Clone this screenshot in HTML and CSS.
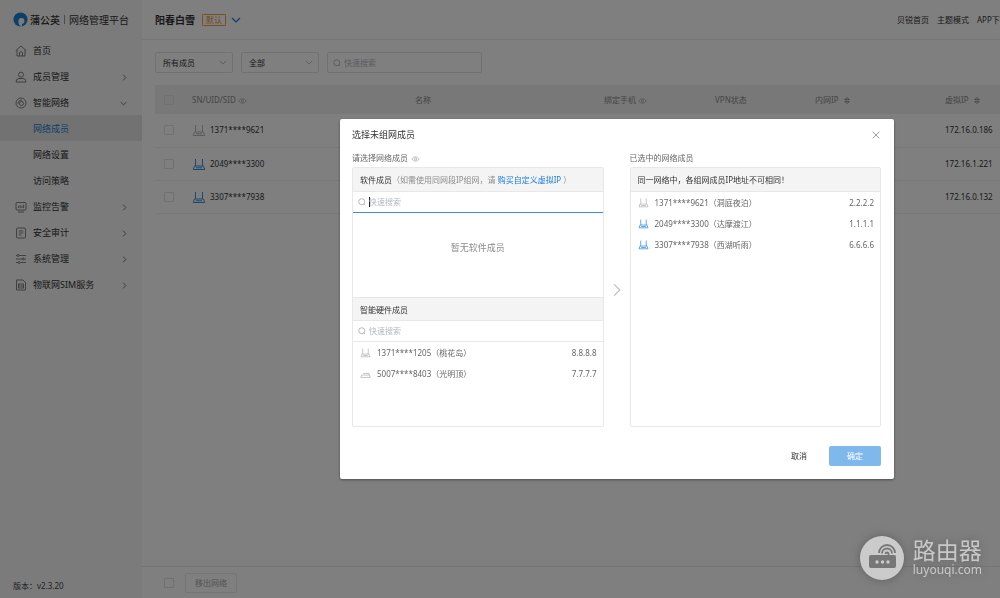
FILE: index.html
```html
<!DOCTYPE html>
<html lang="zh-CN">
<head>
<meta charset="utf-8">
<title>蒲公英网络管理平台</title>
<link rel="stylesheet" href="styles.css">
</head>
<body>
<svg class="defs" aria-hidden="true">
  <symbol id="right" viewBox="0 0 6 10"><path d="M1 1l4 4-4 4"/></symbol>
  <symbol id="down" viewBox="0 0 10 6"><path d="M1 1l4 4 4-4"/></symbol>
  <symbol id="search" viewBox="0 0 10 10"><circle cx="4.7" cy="4.7" r="3.8"/><path d="M7.400 7.400L8.800 8.800"/></symbol>
  <symbol id="eye" viewBox="0 0 12 8"><path d="M1 4q5-6 10 0q-5 6-10 0z"/><circle cx="6" cy="4" r="1.5"/></symbol>
  <symbol id="sort" viewBox="0 0 8 10"><path d="M1.5 4L4 1.5 6.500 4zM1.500 6L4 8.500 6.500 6z"/></symbol>
  <symbol id="router" viewBox="0 0 14 14"><path d="M3.500 2v7M10.500 2v7"/><path class="body" d="M2.500 9h9l1.200 3.500H1.300z"/><path class="thin" d="M4 10.800h6"/></symbol>
  <symbol id="box" viewBox="0 0 14 14"><path class="body" d="M2 9h10l1 3H1z"/><path d="M4 7h7.500v2"/></symbol>
</svg>

<div class="app">
  <aside class="sidebar">
    <div class="brand">
      <svg class="logo" viewBox="0 0 16 16"><circle cx="8" cy="8" r="7.500" fill="#1a7fd0"/><circle cx="9" cy="9.500" r="3.200" fill="#f7f7f7"/><path d="M5.800 10q0 4 3.200 6l1-4z" fill="#f7f7f7"/></svg>
      <strong>蒲公英</strong><span class="bar"></span><span>网络管理平台</span>
    </div>
    <nav class="menu">
      <a href="#"><svg class="ico" viewBox="0 0 12 12"><path d="M.8 5.500L6 1l5.200 4.500M2 5v6h8V5M4.500 11V7.500q1.500-2 3 0V11"/></svg><span>首页</span></a>
      <a href="#"><svg class="ico" viewBox="0 0 12 12"><circle cx="6" cy="3.700" r="2.500"/><path d="M1 11q0-3.500 3-3.500h4q3 0 3 3.500z"/></svg><span>成员管理</span><svg class="arrow"><use href="#right"/></svg></a>
      <a href="#"><svg class="ico" viewBox="0 0 12 12"><circle cx="6" cy="6" r="5"/><circle cx="6.500" cy="6.500" r="2"/><path d="M3 7q0-4 4-3.800"/></svg><span>智能网络</span><svg class="arrow down"><use href="#down"/></svg></a>
      <a href="#" class="sub active" aria-current="page">网络成员</a>
      <a href="#" class="sub">网络设置</a>
      <a href="#" class="sub">访问策略</a>
      <a href="#"><svg class="ico" viewBox="0 0 12 12"><rect x="1" y="1.500" width="10" height="7.500" rx="1"/><path d="M3 11h6M3.500 7V5M5.200 7V4M6.900 7V5M8.600 7V3.500"/></svg><span>监控告警</span><svg class="arrow"><use href="#right"/></svg></a>
      <a href="#"><svg class="ico" viewBox="0 0 12 12"><rect x="1.500" y="1" width="9" height="10" rx="1"/><path d="M3.800 4h4.500M3.800 6h4.500M3.800 8h2.500"/></svg><span>安全审计</span><svg class="arrow"><use href="#right"/></svg></a>
      <a href="#"><svg class="ico" viewBox="0 0 12 12"><path d="M1 2.500h1M4 2.500h7M1 6h6M9.500 6H11M1 9.500h2M5.500 9.500H11"/><circle cx="3" cy="2.500" r="1"/><circle cx="8.200" cy="6" r="1"/><circle cx="4.200" cy="9.500" r="1"/></svg><span>系统管理</span><svg class="arrow"><use href="#right"/></svg></a>
      <a href="#"><svg class="ico" viewBox="0 0 12 12"><path d="M1.500 1H8l2.500 2.500V11h-9z"/><rect x="3.500" y="5" width="5" height="4"/><path d="M3.500 7h5"/></svg><span>物联网SIM服务</span><svg class="arrow"><use href="#right"/></svg></a>
    </nav>
    <div class="version">版本：v2.3.20</div>
  </aside>

  <main class="main">
    <header class="topbar">
      <h1>阳春白雪</h1><span class="tag">默认</span><svg class="switch"><use href="#down"/></svg>
      <nav class="links"><a href="#">贝锐首页</a><a href="#">主题模式</a><a href="#">APP下载</a></nav>
    </header>
    <section class="content">
      <div class="filters">
        <label class="pick"><select aria-label="成员类型"><option>所有成员</option></select><svg><use href="#down"/></svg></label>
        <label class="pick"><select aria-label="状态"><option>全部</option></select><svg><use href="#down"/></svg></label>
        <label class="find"><svg><use href="#search"/></svg><input type="text" placeholder="快速搜索" aria-label="快速搜索"></label>
      </div>
      <table class="members">
        <colgroup><col class="c-check"><col class="c-sn"><col class="c-name"><col class="c-phone"><col class="c-vpn"><col class="c-lan"><col></colgroup>
        <thead><tr>
          <th class="check"><input type="checkbox" aria-label="全选"></th>
          <th>SN/UID/SID<svg class="eye"><use href="#eye"/></svg></th>
          <th>名称</th>
          <th>绑定手机<svg class="eye"><use href="#eye"/></svg></th>
          <th>VPN状态</th>
          <th>内网IP<svg class="sort"><use href="#sort"/></svg></th>
          <th>虚拟IP<svg class="sort"><use href="#sort"/></svg></th>
        </tr></thead>
        <tbody>
          <tr><td class="check"><input type="checkbox" aria-label="1371****9621"></td><td><span class="dev"><svg class="router off"><use href="#router"/></svg>1371****9621</span></td><td></td><td></td><td></td><td></td><td>172.16.0.186</td></tr>
          <tr><td class="check"><input type="checkbox" aria-label="2049****3300"></td><td><span class="dev"><svg class="router"><use href="#router"/></svg>2049****3300</span></td><td></td><td></td><td></td><td></td><td>172.16.1.221</td></tr>
          <tr><td class="check"><input type="checkbox" aria-label="3307****7938"></td><td><span class="dev"><svg class="router"><use href="#router"/></svg>3307****7938</span></td><td></td><td></td><td></td><td></td><td>172.16.0.132</td></tr>
        </tbody>
      </table>
    </section>
    <footer class="actions"><input type="checkbox" aria-label="全选"><button type="button" disabled>移出网络</button></footer>
  </main>
</div>

<div class="mask">
  <div class="dialog" role="dialog" aria-labelledby="dlg-title">
    <div class="dialog-head"><h2 id="dlg-title">选择未组网成员</h2><button type="button" class="close" aria-label="关闭"><svg viewBox="0 0 8 8"><path d="M.7.700l6.600 6.600M7.300.700L.7 7.300"/></svg></button></div>
    <div class="transfer">
      <section class="side">
        <p class="caption">请选择网络成员<svg class="eye"><use href="#eye"/></svg></p>
        <div class="panel">
          <h3>软件成员<span class="hint">（如需使用同网段IP组网，请 <a href="#">购买自定义虚拟IP</a> ）</span></h3>
          <label class="search focus"><svg><use href="#search"/></svg><i class="caret"></i><input type="text" placeholder="快速搜索" aria-label="搜索软件成员"></label>
          <div class="empty">暂无软件成员</div>
          <h3 class="second">智能硬件成员</h3>
          <label class="search"><svg><use href="#search"/></svg><input type="text" placeholder="快速搜索" aria-label="搜索智能硬件成员"></label>
          <ul>
            <li><svg class="router off"><use href="#router"/></svg><span>1371****1205（桃花岛）</span><span class="ip">8.8.8.8</span></li>
            <li><svg class="router off"><use href="#box"/></svg><span>5007****8403（光明顶）</span><span class="ip">7.7.7.7</span></li>
          </ul>
        </div>
      </section>
      <svg class="move"><use href="#right"/></svg>
      <section class="side">
        <p class="caption">已选中的网络成员</p>
        <div class="panel">
          <h3>同一网络中，各组网成员IP地址不可相同！</h3>
          <ul>
            <li><svg class="router off"><use href="#router"/></svg><span>1371****9621（洞庭夜泊）</span><span class="ip">2.2.2.2</span></li>
            <li><svg class="router"><use href="#router"/></svg><span>2049****3300（达摩渡江）</span><span class="ip">1.1.1.1</span></li>
            <li><svg class="router"><use href="#router"/></svg><span>3307****7938（西湖听雨）</span><span class="ip">6.6.6.6</span></li>
          </ul>
        </div>
      </section>
    </div>
    <div class="dialog-foot"><button type="button" class="cancel">取消</button><button type="button" class="ok">确定</button></div>
  </div>
</div>

<div class="mark">
  <svg viewBox="0 0 44 44"><circle cx="22" cy="22" r="22" fill="#cbcbcb"/><rect x="9" y="19" width="27" height="13" rx="2" fill="#777"/><g fill="#cbcbcb"><circle cx="17" cy="26" r="1.700"/><circle cx="22.500" cy="26" r="1.700"/><circle cx="28" cy="26" r="1.700"/></g><g fill="none" stroke="#777" stroke-width="1.800"><path d="M19 17a8 8 0 0 1 16 0M22 17.500a5 5 0 0 1 10 0"/><path d="M25.500 18a1.500 1.500 0 0 1 3 0v2"/></g></svg>
  <div class="mark-text"><b>路由器</b><span>luyouqi.com</span></div>
</div>
</body>
</html>
```

FILE: styles.css
```css
* { box-sizing: border-box; margin: 0; padding: 0; }

body {
  height: 100vh;
  overflow: hidden;
  font: 8px/12px "Noto Sans", "Noto Sans CJK SC", sans-serif;
  color: #333;
  background: #fff;
}

a { color: inherit; text-decoration: none; }
button, input, select { font: inherit; color: inherit; }
ul { list-style: none; }
svg { flex: none; fill: none; stroke: currentColor; }
.defs { position: absolute; width: 0; height: 0; }

.app { display: flex; height: 100%; }

/* Sidebar */
.sidebar {
  display: flex;
  flex-direction: column;
  flex: 0 0 142px;
  background: #f6f6f6;
}
.brand {
  display: flex;
  align-items: center;
  height: 37px;
  padding: 2px 0 0 13px;
  font-size: 10px;
  white-space: nowrap;
}
.brand strong { font-weight: 500; }
.logo { width: 15px; height: 15px; margin-right: 2px; stroke: none; }
.bar { width: 1px; height: 9px; margin: 0 4px; background: #999; }
.menu a {
  display: flex;
  align-items: center;
  height: 26px;
  padding: 2px 15px 0 15px;
  font-size: 9px;
}
.menu .sub { padding-left: 33px; }
.menu .active { background: #e4e4e4; color: #2283d8; }
.ico { width: 12px; height: 12px; margin-right: 6px; color: #666; stroke-width: 0.8; }
.arrow { width: 5px; height: 7px; margin-left: auto; color: #444; }
.arrow.down { width: 7px; height: 5px; }
.version { margin-top: auto; padding: 0 0 6px 13px; color: #444; }

/* Main area */
.main { display: flex; flex: 1; flex-direction: column; min-width: 0; }
.topbar {
  display: flex;
  align-items: center;
  height: 40px;
  padding-left: 13px;
  border-bottom: 1px solid #eee;
}
.topbar h1 { font-size: 10px; font-weight: 700; }
.tag {
  margin: 0 5px 0 7px;
  padding: 0 3px;
  border: 1px solid #f0a13c;
  border-radius: 1px;
  color: #e8922a;
  line-height: 10px;
}
.switch { width: 10px; height: 6px; color: #1a78d0; stroke-width: 1.200; }
.links {
  display: flex;
  flex: 0 0 103px;
  gap: 8px;
  margin-left: auto;
  padding-top: 1px;
  overflow: hidden;
  white-space: nowrap;
}
.links a { flex: none; }

.content { flex: 1; padding: 12px 0 0 13px; }
.filters { display: flex; gap: 8px; margin-bottom: 12px; }
.pick, .find {
  display: flex;
  align-items: center;
  height: 21px;
  border: 1px solid #e2e2e2;
  border-radius: 2px;
}
.pick { width: 78px; padding-right: 5px; }
.pick select {
  flex: 1;
  min-width: 0;
  height: 19px;
  padding-left: 7px;
  border: 0;
  appearance: none;
  background: transparent;
}
.pick svg { width: 8px; height: 5px; color: #aaa; }
.find { width: 155px; padding-left: 5px; }
.find svg, .search svg { width: 8px; height: 8px; color: #aaa; }
.find input { flex: 1; min-width: 0; padding-left: 3px; border: 0; background: transparent; outline: 0; }
input::placeholder { color: #b3b8c2; opacity: 1; }

input[type="checkbox"] {
  display: block;
  width: 10px;
  height: 10px;
  border: 1px solid #e2e2e2;
  border-radius: 1px;
  appearance: none;
}

.members { width: 100%; table-layout: fixed; border-collapse: collapse; }
.c-check { width: 37px; }
.c-sn { width: 223px; }
.c-name { width: 189px; }
.c-phone { width: 111px; }
.c-vpn { width: 100px; }
.c-lan { width: 130px; }
.members th {
  height: 29px;
  padding-top: 1px;
  background: #f1f1f1;
  color: #8a8a8a;
  font-weight: 400;
  text-align: left;
  white-space: nowrap;
}
.members td { height: 33px; border-bottom: 1px solid #f0f0f0; }
.members .check { padding-left: 9px; }
.eye { width: 9px; height: 6px; margin-left: 2px; color: #999; stroke-width: 0.8; vertical-align: middle; }
.sort { width: 8px; height: 9px; margin-left: 4px; vertical-align: middle; }
.dev { display: flex; align-items: center; gap: 4px; }
.router { width: 14px; height: 14px; color: #3a90dc; stroke-width: 1; }
.router .body { fill: currentColor; fill-opacity: 0.3; }
.off { color: #b8b8b8; }

.actions {
  display: flex;
  align-items: center;
  gap: 11px;
  height: 32px;
  padding-left: 22px;
  border-top: 1px solid #eaeaea;
}
.actions button {
  width: 52px;
  height: 20px;
  border: 1px solid #eaeaea;
  border-radius: 2px;
  background: transparent;
  color: #a8a8a8;
}

/* Dialog */
.mask {
  position: fixed;
  inset: 0;
  display: grid;
  place-items: center;
  padding-left: 234px;
  background: rgba(0, 0, 0, 0.5);
}
.dialog {
  width: 554px;
  padding: 10px 13px 13px 12px;
  border-radius: 2px;
  background: #fff;
  box-shadow: 0 1px 3px rgba(0, 0, 0, 0.4);
}
.dialog-head { display: flex; align-items: center; justify-content: space-between; height: 12px; margin-bottom: 11px; }
.dialog-head h2 { font-size: 9px; font-weight: 400; }
.close { width: 10px; height: 10px; border: 0; background: none; color: #888; }
.close svg { display: block; width: 8px; height: 8px; margin: auto; stroke-width: 0.8; }
.transfer { display: flex; align-items: center; }
.side { flex: 1; min-width: 0; }
.caption { height: 12px; margin-bottom: 3px; color: #666; }
.caption .eye { margin-left: 3px; }
.panel { height: 260px; border: 1px solid #e8e8e8; border-radius: 2px; }
.panel h3 {
  height: 24px;
  padding: 1px 0 0 7px;
  border-bottom: 1px solid #e8e8e8;
  background: #f4f4f4;
  font-size: 8px;
  font-weight: 400;
  line-height: 22px;
  white-space: nowrap;
}
.panel .second { border-top: 1px solid #e8e8e8; line-height: 21px; }
.hint { color: #8c8c8c; }
.hint a { color: #1d7be0; }
.search {
  display: flex;
  align-items: center;
  height: 21px;
  padding-left: 5px;
  border-bottom: 1px solid #e8e8e8;
}
.search.focus { border-bottom-color: #3f8ce8; }
.search input { flex: 1; min-width: 0; border: 0; outline: 0; background: transparent; }
.search svg { margin-right: 3px; }
.caret { width: 1px; height: 10px; margin-right: -1px; background: #222; }
.empty { display: grid; place-items: center; height: 84px; padding-bottom: 14px; color: #8c8c8c; font-size: 9px; }
.panel li { display: flex; align-items: center; height: 21px; padding: 0 6px 0 7px; color: #666; }
.panel li .router { width: 11px; height: 11px; margin-right: 6px; }
.ip { margin-left: auto; }
.move { width: 10px; height: 14px; margin: 0 8px; color: #bbb; stroke-width: 0.8; }
.dialog-foot { display: flex; justify-content: flex-end; gap: 10px; margin-top: 19px; }
.dialog-foot button { width: 52px; height: 20px; border: 0; border-radius: 2px; background: transparent; }
.dialog-foot .ok { background: #7fb9ec; color: #fff; }
.dialog-foot .cancel { width: 40px; }

/* Site badge */
.mark {
  position: fixed;
  right: 18px;
  bottom: 18px;
  display: flex;
  align-items: center;
  gap: 9px;
  color: #c8c8c8;
  filter: drop-shadow(0 0 5px rgba(0, 0, 0, 0.25));
}
.mark svg { width: 44px; height: 44px; stroke: none; }
.mark-text { display: flex; flex-direction: column; }
.mark b { font-size: 23px; font-weight: 400; line-height: 24px; }
.mark span { font: 12px/16px "Noto Sans", sans-serif; }
```
